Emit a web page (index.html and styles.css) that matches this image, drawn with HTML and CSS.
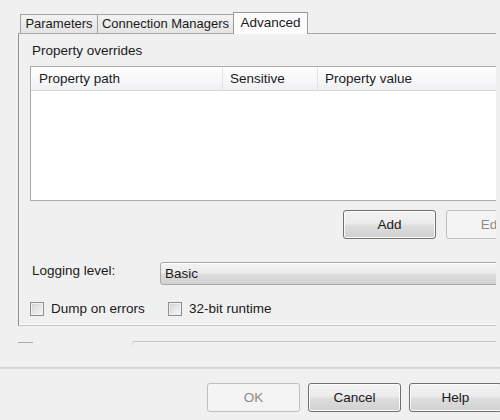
FILE: index.html
```html
<!DOCTYPE html>
<html>
<head>
<meta charset="utf-8">
<link rel="stylesheet" href="styles.css">
</head>
<body>
<div class="clip">
  <div class="tabs">
    <div class="tab tab-params">Parameters</div>
    <div class="tab tab-conn">Connection Managers</div>
    <div class="tab tab-adv selected">Advanced</div>
  </div>
  <div class="panel">
    <div class="title">Property overrides</div>
    <div class="grid">
      <div class="grid-head">
        <div class="col col-path">Property path</div>
        <div class="col col-sens">Sensitive</div>
        <div class="col col-val">Property value</div>
      </div>
      <div class="grid-body"></div>
    </div>
    <div class="actions">
      <div class="btn">Add</div>
      <div class="btn disabled">Edit</div>
    </div>
    <div class="logging">
      <div class="log-label">Logging level:</div>
      <div class="combo">Basic</div>
    </div>
    <div class="checks">
      <div class="check check-dump"><span class="box"></span><span class="check-label">Dump on errors</span></div>
      <div class="check"><span class="box"></span><span class="check-label">32-bit runtime</span></div>
    </div>
  </div>
  <div class="below">
    <div class="stub"></div>
    <div class="field-edge"></div>
  </div>
</div>
<div class="separator"></div>
<div class="footer">
  <div class="btn disabled">OK</div>
  <div class="btn">Cancel</div>
  <div class="btn">Help</div>
</div>
</body>
</html>
```
FILE: styles.css
```css
html, body {
  margin: 0;
  padding: 0;
  background: #f0f0f0;
  width: 500px;
  height: 420px;
  overflow: hidden;
  font-family: "Liberation Sans", Arial, sans-serif;
  font-size: 13.5px;
  color: #1a1a1a;
}

.clip {
  width: 496px;
  overflow: hidden;
}

.tabs {
  display: flex;
  align-items: flex-end;
  height: 21px;
  padding: 12px 0 0 20px;
  font-size: 13px;
}

.tab {
  box-sizing: border-box;
  height: 19px;
  line-height: 17px;
  text-align: center;
  border: 1px solid #a3a3a3;
  border-bottom: none;
  background: linear-gradient(#f3f3f3, #e4e4e4);
  white-space: nowrap;
}

.tab-params { width: 78px; }
.tab-conn { width: 137px; margin-left: -1px; }
.tab-adv { width: 75px; margin-left: -1px; }

.tab.selected {
  position: relative;
  z-index: 1;
  height: 22px;
  margin-bottom: -1px;
  line-height: 16px;
  padding-top: 2px;
  background: #fcfcfc;
  border-color: #9a9a9a;
  font-size: 13.5px;
}

.panel {
  width: 560px;
  margin-left: 18px;
  border-top: 1px solid #a8a8a8;
  border-left: 1px solid #8e9096;
  border-bottom: 1px solid #c2c2c2;
  box-shadow: inset 0 -1px 0 #ffffff;
  padding: 9px 0 9px 11px;
}

.title {
  margin-left: 2px;
  line-height: 16px;
  margin-bottom: 7px;
}

.grid {
  width: 560px;
  border: 1px solid #a9abb0;
  background: #ffffff;
}

.grid-head {
  display: flex;
  height: 23px;
  border-bottom: 1px solid #d5d5d5;
  background: linear-gradient(#ffffff, #f6f7f8 60%, #eff0f1);
}

.col {
  box-sizing: border-box;
  line-height: 22px;
  padding-top: 1px;
  padding-left: 7px;
  border-right: 1px solid #e2e3e5;
}

.col-path { width: 192px; padding-left: 8px; }
.col-sens { width: 95px; }
.col-val { flex: 1; border-right: none; }

.grid-body {
  height: 109px;
}

.actions {
  display: flex;
  gap: 10px;
  margin-top: 9px;
  padding-left: 313px;
}

.btn {
  box-sizing: border-box;
  flex: none;
  width: 93px;
  height: 29px;
  line-height: 27px;
  text-align: center;
  border: 1px solid #707070;
  border-radius: 3px;
  background: linear-gradient(#f3f3f3, #ececec 45%, #dddddd 55%, #d0d0d0);
  box-shadow: inset 0 0 0 1px #fbfbfb;
}

.btn.disabled {
  border-color: #bcc0c3;
  background: #f4f4f4;
  box-shadow: none;
  color: #8a8a8a;
}

.logging {
  display: flex;
  margin-top: 23px;
}

.log-label {
  width: 128px;
  margin-left: 2px;
  line-height: 18px;
}

.combo {
  box-sizing: border-box;
  flex: 1;
  height: 23px;
  line-height: 21px;
  padding-left: 4px;
  border: 1px solid #a8a8a8;
  border-radius: 3px;
  background: linear-gradient(#f3f3f3, #ececec 45%, #dcdcdc 55%, #d2d2d2);
  box-shadow: inset 0 1px 0 #fdfdfd;
}

.checks {
  display: flex;
  margin-top: 16px;
  height: 15px;
}

.check {
  display: flex;
  align-items: center;
  gap: 7px;
}

.check-dump {
  width: 138px;
}

.box {
  box-sizing: border-box;
  flex: none;
  width: 14px;
  height: 14px;
  border: 1px solid #8e8f8f;
  background: linear-gradient(135deg, #d4d6d9, #f7f7f7);
  box-shadow: inset 0 0 0 1px #eef0f2, inset 1px 1px 2px #c8cacd;
}

.check-label {
  line-height: 15px;
  white-space: nowrap;
}

.below {
  display: flex;
  align-items: flex-start;
  height: 26px;
  margin-top: 15px;
}

.stub {
  width: 15px;
  height: 1px;
  margin-left: 18px;
  margin-top: 1px;
  background: #a9a9a9;
}

.field-edge {
  flex: 1;
  height: 3px;
  margin-left: 99px;
  border-top: 1px solid #c4c8cc;
  border-left: 1px solid #d6d9dc;
  border-top-left-radius: 2px;
}

.separator {
  height: 2px;
  background: linear-gradient(#d0d0d0, #dadada);
}

.footer {
  display: flex;
  gap: 8px;
  margin-top: 14px;
  padding-left: 207px;
  overflow: hidden;
}
```
